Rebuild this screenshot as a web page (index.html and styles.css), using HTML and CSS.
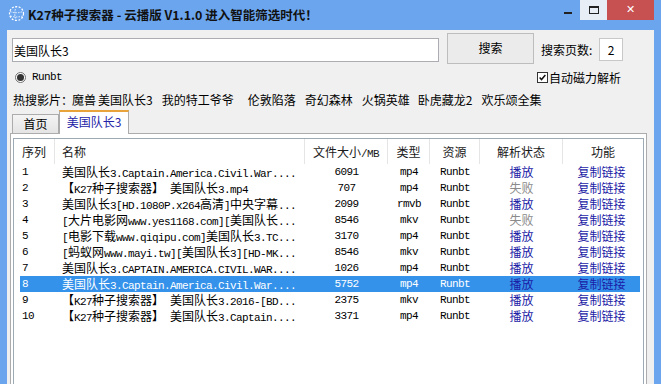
FILE: index.html
```html
<!DOCTYPE html>
<html>
<head>
    <meta charset="utf-8">
    <title>K27种子搜索器</title>
    <link rel="stylesheet" href="styles.css">
</head>
<body>
<div class="window">
    <div class="titlebar">
        <svg class="app-icon" viewBox="0 0 17 17">
            <circle cx="8.5" cy="8.5" r="7" fill="none" stroke="#fff" stroke-width="1.2" stroke-dasharray="2 1.5"/>
            <path d="M2 6.5 Q8.5 9 15 6.5 M2.5 11 Q8.5 13 14.5 11 M8.5 1.5 Q5 8.5 8.5 15.5" fill="none" stroke="#fff" stroke-width="0.9" stroke-dasharray="1.5 1.2"/>
        </svg>
        <span class="title">K27种子搜索器 - 云播版 V1.1.0 进入智能筛选时代！</span>
        <div class="controls">
            <span class="btn-min"></span>
            <span class="btn-max"><i></i></span>
            <span class="btn-close">✕</span>
        </div>
    </div>

    <div class="client">
        <div class="search-row">
            <input class="search-box" type="text" value="美国队长3">
            <button class="search-btn">搜索</button>
            <span class="pages-label">搜索页数:</span>
            <input class="pages-box" type="text" value="2">
        </div>

        <div class="option-row">
            <label class="radio"><span class="radio-dot"></span><span class="en">Runbt</span></label>
            <label class="check">
                <span class="check-box">
                    <svg viewBox="0 0 11 11"><path d="M2 5.5 L4.3 8 L9 2.5" fill="none" stroke="#111" stroke-width="1.8"/></svg>
                </span>自动磁力解析
            </label>
        </div>

        <div class="hot-row">
            <span>热搜影片：</span>
            <a class="first">魔兽</a>
            <a class="tight">美国队长3</a>
            <a>我的特工爷爷</a>
            <a class="wide">伦敦陷落</a>
            <a>奇幻森林</a>
            <a>火锅英雄</a>
            <a class="narrow">卧虎藏龙2</a>
            <a>欢乐颂全集</a>
        </div>

        <div class="tabs">
            <div class="tab">首页</div>
            <div class="tab active">美国队长3</div>
        </div>

        <div class="tab-page">
            <div class="listview">
                <div class="lv-header">
                    <div class="left">序列</div>
                    <div class="left name">名称</div>
                    <div>文件大小<span class="en">/MB</span></div>
                    <div>类型</div>
                    <div>资源</div>
                    <div>解析状态</div>
                    <div class="last">功能</div>
                </div>

                <div class="lv-row">
                    <div class="num en">1</div>
                    <div class="name">美国队长<span class="en">3.Captain.America.Civil.War....</span></div>
                    <div class="en">6091</div><div class="en">mp4</div><div class="en">Runbt</div>
                    <div class="link">播放</div><div class="link">复制链接</div>
                </div>
                <div class="lv-row">
                    <div class="num en">2</div>
                    <div class="name">【<span class="en">K27</span>种子搜索器】<span class="en"> </span>美国队长<span class="en">3.mp4</span></div>
                    <div class="en">707</div><div class="en">mp4</div><div class="en">Runbt</div>
                    <div class="fail">失败</div><div class="link">复制链接</div>
                </div>
                <div class="lv-row">
                    <div class="num en">3</div>
                    <div class="name">美国队长<span class="en">3[HD.1080P.x264</span>高清<span class="en">]</span>中央字幕<span class="en">...</span></div>
                    <div class="en">2099</div><div class="en">rmvb</div><div class="en">Runbt</div>
                    <div class="link">播放</div><div class="link">复制链接</div>
                </div>
                <div class="lv-row">
                    <div class="num en">4</div>
                    <div class="name"><span class="en">[</span>大片电影网<span class="en">www.yes1168.com][</span>美国队长<span class="en">...</span></div>
                    <div class="en">8546</div><div class="en">mkv</div><div class="en">Runbt</div>
                    <div class="fail">失败</div><div class="link">复制链接</div>
                </div>
                <div class="lv-row">
                    <div class="num en">5</div>
                    <div class="name"><span class="en">[</span>电影下载<span class="en">www.qiqipu.com]</span>美国队长<span class="en">3.TC...</span></div>
                    <div class="en">3170</div><div class="en">mp4</div><div class="en">Runbt</div>
                    <div class="link">播放</div><div class="link">复制链接</div>
                </div>
                <div class="lv-row">
                    <div class="num en">6</div>
                    <div class="name"><span class="en">[</span>蚂蚁网<span class="en">www.mayi.tw][</span>美国队长<span class="en">3][HD-MK...</span></div>
                    <div class="en">8546</div><div class="en">mkv</div><div class="en">Runbt</div>
                    <div class="link">播放</div><div class="link">复制链接</div>
                </div>
                <div class="lv-row">
                    <div class="num en">7</div>
                    <div class="name">美国队长<span class="en">3.CAPTAIN.AMERICA.CIVIL.WAR....</span></div>
                    <div class="en">1026</div><div class="en">mp4</div><div class="en">Runbt</div>
                    <div class="link">播放</div><div class="link">复制链接</div>
                </div>
                <div class="lv-row selected">
                    <div class="num en">8</div>
                    <div class="name">美国队长<span class="en">3.Captain.America.Civil.War....</span></div>
                    <div class="en">5752</div><div class="en">mp4</div><div class="en">Runbt</div>
                    <div class="link">播放</div><div class="link">复制链接</div>
                </div>
                <div class="lv-row">
                    <div class="num en">9</div>
                    <div class="name">【<span class="en">K27</span>种子搜索器】<span class="en"> </span>美国队长<span class="en">3.2016-[BD...</span></div>
                    <div class="en">2375</div><div class="en">mkv</div><div class="en">Runbt</div>
                    <div class="link">播放</div><div class="link">复制链接</div>
                </div>
                <div class="lv-row">
                    <div class="num en">10</div>
                    <div class="name">【<span class="en">K27</span>种子搜索器】<span class="en"> </span>美国队长<span class="en">3.Captain....</span></div>
                    <div class="en">3371</div><div class="en">mp4</div><div class="en">Runbt</div>
                    <div class="link">播放</div><div class="link">复制链接</div>
                </div>
            </div>
        </div>
    </div>
</div>
</body>
</html>
```

FILE: styles.css
```css
* {
    box-sizing: border-box;
}
body {
    margin: 0;
    background: #6ba5ee;
    font-family: "Noto Sans CJK SC", sans-serif;
    font-size: 12px;
    color: #000;
    overflow: hidden;
}
.en {
    font-family: "Liberation Mono", monospace;
    font-size: 11px;
    letter-spacing: -0.6px;
}
.window {
    width: 661px;
    height: 384px;
    display: flex;
    flex-direction: column;
    background: #6ba5ee;
}

/* title bar */
.titlebar {
    height: 30px;
    flex: 0 0 30px;
    display: flex;
    align-items: flex-start;
    padding-left: 8px;
}
.app-icon {
    width: 17px;
    height: 17px;
    margin-top: 5px;
}
.title {
    margin-left: 3px;
    margin-top: 5px;
    font-weight: bold;
    font-size: 12.5px;
    line-height: 20px;
    color: #111;
}
.controls {
    margin-left: auto;
    margin-right: 7px;
    display: flex;
    height: 20px;
}
.btn-min {
    width: 25px;
    display: flex;
    justify-content: center;
    align-items: flex-end;
    padding-bottom: 6px;
}
.btn-min::before {
    content: "";
    width: 8px;
    height: 2px;
    background: #222;
}
.btn-max {
    width: 27px;
    background: #e8eef5;
    display: flex;
    justify-content: center;
    align-items: center;
}
.btn-max i {
    width: 10px;
    height: 8px;
    border: 1px solid #222;
    border-top-width: 2px;
}
.btn-close {
    width: 47px;
    background: #c75050;
    color: #fff;
    font-family: "DejaVu Sans", sans-serif;
    font-size: 11px;
    font-weight: bold;
    text-align: center;
    line-height: 20px;
}

/* client area */
.client {
    flex: 1;
    margin: 0 7px;
    background: #f0f0f0;
    padding: 3px 0 0 5px;
    display: flex;
    flex-direction: column;
    min-height: 0;
}
.search-row {
    display: flex;
    align-items: flex-start;
    height: 31px;
    flex: 0 0 31px;
}
.search-box {
    margin-top: 5px;
    width: 427px;
    height: 24px;
    border: 1px solid #abadb3;
    background: #fff;
    padding: 0 1px;
    font-family: "Noto Sans CJK SC", sans-serif;
    font-size: 12px;
    outline: none;
}
.search-btn {
    margin-left: 8px;
    width: 87px;
    height: 31px;
    border: 1px solid #bdbdbd;
    background: #ebebeb;
    font-family: "Noto Sans CJK SC", sans-serif;
    font-size: 12px;
    padding: 0 0 3px 0;
}
.pages-label {
    margin-left: 7px;
    margin-top: 9px;
    width: 58px;
    line-height: 16px;
}
.pages-box {
    margin-top: 5px;
    width: 24px;
    height: 23px;
    border: 1px solid #c8c8c8;
    background: #fff;
    text-align: center;
    font-family: "Noto Sans CJK SC", sans-serif;
    font-size: 12px;
    padding: 0;
}
.option-row {
    height: 26px;
    flex: 0 0 26px;
    display: flex;
    align-items: center;
}
.radio {
    margin-left: 3px;
    display: flex;
    align-items: center;
    font-size: 12px;
}
.radio-dot {
    width: 11px;
    height: 11px;
    border-radius: 50%;
    border: 1px solid #707070;
    background: #fff;
    margin-right: 6px;
    display: flex;
    justify-content: center;
    align-items: center;
}
.radio-dot::before {
    content: "";
    width: 7px;
    height: 7px;
    border-radius: 50%;
    background: #333;
}
.check {
    margin-left: auto;
    margin-right: 33px;
    display: flex;
    align-items: center;
}
.check-box {
    width: 11px;
    height: 11px;
    border: 1px solid #333;
    background: #fff;
    margin-right: 1px;
    display: flex;
}
.check-box svg {
    width: 9px;
    height: 9px;
}
.hot-row {
    height: 20px;
    flex: 0 0 20px;
    line-height: 20px;
    display: flex;
    margin-left: 1px;
    white-space: nowrap;
}
.hot-row a {
    margin-left: 9px;
}
.hot-row a.first {
    margin-left: -1px;
}
.hot-row a.tight {
    margin-left: 2px;
}
.hot-row a.wide {
    margin-left: 14px;
}
.hot-row a.narrow {
    margin-left: 8px;
}

/* tabs */
.tabs {
    height: 23px;
    flex: 0 0 23px;
    display: flex;
    align-items: flex-end;
}
.tab {
    width: 47px;
    height: 19px;
    border: 1px solid #acacac;
    border-bottom: none;
    background: linear-gradient(#f4f4f4, #e4e4e4);
    text-align: center;
    line-height: 18px;
}
.tab.active {
    width: 70px;
    height: 24px;
    margin-bottom: -1px;
    border-top: 2px solid #e8a43a;
    background: #fff;
    color: #2323a8;
    line-height: 20px;
    position: relative;
    z-index: 1;
}
.tab-page {
    flex: 1;
    margin-left: -2px;
    width: 637px;
    border: 1px solid #acacac;
    border-bottom: none;
    background: #fff;
    padding: 4px 2px 0 2px;
    display: flex;
    min-height: 0;
}
.listview {
    flex: 1;
    border: 1px solid #9ea9b6;
    border-bottom: none;
    background: #fff;
    overflow: hidden;
}

/* list rows */
.lv-header {
    display: grid;
    grid-template-columns: 41px 250px 83px 42px 50px 83px 80px;
    height: 25px;
}
.lv-header div {
    border-right: 1px solid #e5e5e5;
    text-align: center;
    padding-top: 4px;
    line-height: 18px;
    color: #1a1a1a;
}
.lv-header div.left {
    text-align: left;
    padding-left: 8px;
}
.lv-header div.name {
    padding-left: 7px;
}
.lv-header div.last {
    border-right: none;
}
.lv-row {
    display: grid;
    grid-template-columns: 35px 250px 83px 42px 50px 83px 77px;
    margin-left: 6px;
    width: 620px;
    height: 16px;
    line-height: 16px;
}
.lv-row div {
    text-align: center;
    white-space: nowrap;
    overflow: hidden;
}
.lv-row div.num {
    text-align: left;
    padding-left: 2px;
}
.lv-row div.name {
    text-align: left;
    padding-left: 7px;
}
.lv-row .link {
    color: #1c1ca6;
}
.lv-row .fail {
    color: #8a8a8a;
}
.lv-row.selected {
    background: #3592ea;
    color: #fff;
}
```
